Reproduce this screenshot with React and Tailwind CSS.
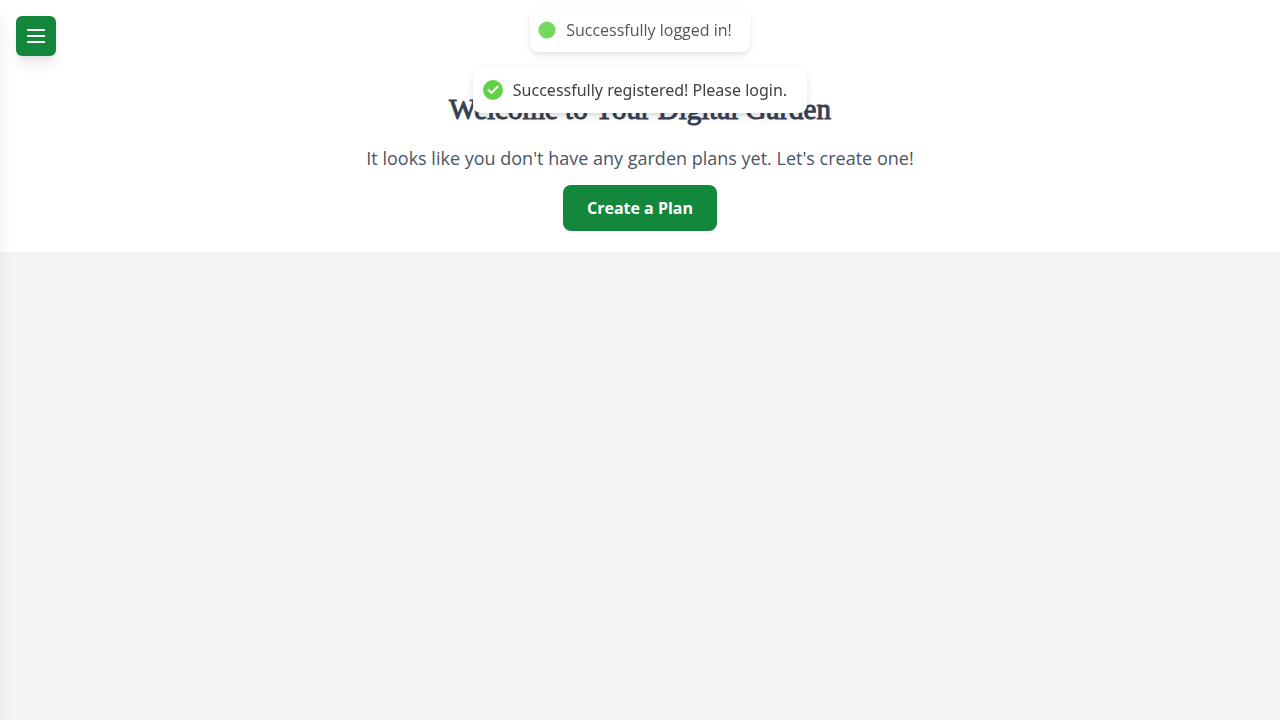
function Toast({ children, className, icon }) {
  return (
    <div
      role="status"
      className={`flex items-center rounded-lg bg-white pb-0.5 shadow-[0_3px_10px_rgba(0,0,0,0.1),0_3px_3px_rgba(0,0,0,0.05)] ${className}`}
    >
      {icon}
      <p className="mx-2.5 whitespace-nowrap">{children}</p>
    </div>
  );
}

function DotIcon() {
  return (
    <svg viewBox="0 0 18 18" className="size-[18px] shrink-0" aria-hidden="true">
      <circle cx="9" cy="9" r="8.6" fill="#61d345" />
      <path d="M7.500 13.200c3 0 5-1 6-3.200" fill="none" stroke="#53c238" strokeWidth="1" />
    </svg>
  );
}

function CheckIcon() {
  return (
    <svg viewBox="0 0 20 20" className="size-5 shrink-0" aria-hidden="true">
      <circle cx="10" cy="10" r="10" fill="#61d345" />
      <path d="M5 9.600 8.600 12.900 15 6.200" fill="none" stroke="#fff" strokeWidth="2" />
    </svg>
  );
}

export default function App() {
  return (
    <div className="relative min-h-screen overflow-hidden bg-gray-100 font-['Open_Sans',sans-serif]">
      <aside
        aria-label="Sidebar"
        className="fixed inset-y-0 left-0 z-20 w-64 -translate-x-full bg-white shadow-[0_10px_15px_-3px_rgba(0,0,0,0.1),0_4px_6px_-4px_rgba(0,0,0,0.1)]"
      />
      <button
        type="button"
        aria-label="Open menu"
        className="fixed top-4 left-4 z-30 rounded-md bg-[#13883d] p-2 text-white shadow-[0_10px_15px_-3px_rgba(0,0,0,0.1),0_4px_6px_-4px_rgba(0,0,0,0.1)]"
      >
        <svg viewBox="0 0 24 24" className="size-6" fill="none" stroke="currentColor" strokeWidth="2" aria-hidden="true">
          <path d="M3 6h18M3 12h18M3 18h18" />
        </svg>
      </button>

      <main className="flex flex-col items-center bg-white px-4 pt-[91px] pb-[21px] text-center">
        <h1 className="font-['Liberation_Serif',serif] text-[29px] leading-9 font-normal text-[#374151] [-webkit-text-stroke:1px_#374151]">
          Welcome to Your Digital Garden
        </h1>
        <p className="mt-[17px] text-lg leading-7 text-[#4b5563]">
          It looks like you don't have any garden plans yet. Let's create one!
        </p>
        <button
          type="button"
          className="mt-[13px] rounded-lg bg-[#13883d] px-6 py-3 leading-[22px] font-bold text-white"
        >
          Create a Plan
        </button>
      </main>

      <div className="pointer-events-none fixed inset-x-0 top-[9px] z-40 flex flex-col items-center gap-4">
        <Toast className="h-[43px] px-2 text-[#363636] opacity-85" icon={<DotIcon />}>
          Successfully logged in!
        </Toast>
        <Toast className="h-[45px] px-2.5 font-['Noto_Sans','Open_Sans',sans-serif] text-[#404040]" icon={<CheckIcon />}>
          Successfully registered! Please login.
        </Toast>
      </div>
    </div>
  );
}
